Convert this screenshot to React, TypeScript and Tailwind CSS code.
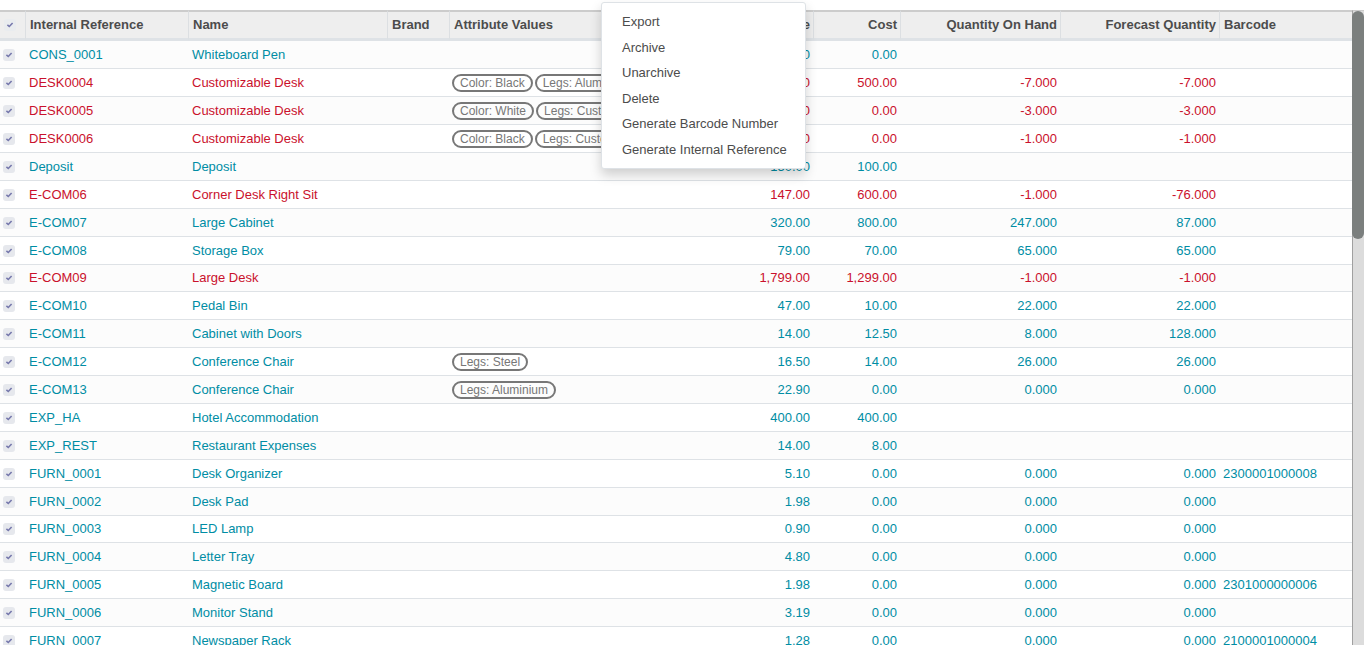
const teal = "text-[#008da4]";
const red = "text-[#ca112c]";

type Row = {
  ref: string;
  name: string;
  tags?: string[];
  price: string;
  cost: string;
  onHand?: string;
  forecast?: string;
  barcode?: string;
  danger?: boolean;
};

const rows: Row[] = [
  { ref: "CONS_0001", name: "Whiteboard Pen", price: "1.20", cost: "0.00" },
  { ref: "DESK0004", name: "Customizable Desk", tags: ["Color: Black", "Legs: Aluminium"], price: "800.40", cost: "500.00", onHand: "-7.000", forecast: "-7.000", danger: true },
  { ref: "DESK0005", name: "Customizable Desk", tags: ["Color: White", "Legs: Custom"], price: "750.00", cost: "0.00", onHand: "-3.000", forecast: "-3.000", danger: true },
  { ref: "DESK0006", name: "Customizable Desk", tags: ["Color: Black", "Legs: Custom"], price: "750.00", cost: "0.00", onHand: "-1.000", forecast: "-1.000", danger: true },
  { ref: "Deposit", name: "Deposit", price: "150.00", cost: "100.00" },
  { ref: "E-COM06", name: "Corner Desk Right Sit", price: "147.00", cost: "600.00", onHand: "-1.000", forecast: "-76.000", danger: true },
  { ref: "E-COM07", name: "Large Cabinet", price: "320.00", cost: "800.00", onHand: "247.000", forecast: "87.000" },
  { ref: "E-COM08", name: "Storage Box", price: "79.00", cost: "70.00", onHand: "65.000", forecast: "65.000" },
  { ref: "E-COM09", name: "Large Desk", price: "1,799.00", cost: "1,299.00", onHand: "-1.000", forecast: "-1.000", danger: true },
  { ref: "E-COM10", name: "Pedal Bin", price: "47.00", cost: "10.00", onHand: "22.000", forecast: "22.000" },
  { ref: "E-COM11", name: "Cabinet with Doors", price: "14.00", cost: "12.50", onHand: "8.000", forecast: "128.000" },
  { ref: "E-COM12", name: "Conference Chair", tags: ["Legs: Steel"], price: "16.50", cost: "14.00", onHand: "26.000", forecast: "26.000" },
  { ref: "E-COM13", name: "Conference Chair", tags: ["Legs: Aluminium"], price: "22.90", cost: "0.00", onHand: "0.000", forecast: "0.000" },
  { ref: "EXP_HA", name: "Hotel Accommodation", price: "400.00", cost: "400.00" },
  { ref: "EXP_REST", name: "Restaurant Expenses", price: "14.00", cost: "8.00" },
  { ref: "FURN_0001", name: "Desk Organizer", price: "5.10", cost: "0.00", onHand: "0.000", forecast: "0.000", barcode: "2300001000008" },
  { ref: "FURN_0002", name: "Desk Pad", price: "1.98", cost: "0.00", onHand: "0.000", forecast: "0.000" },
  { ref: "FURN_0003", name: "LED Lamp", price: "0.90", cost: "0.00", onHand: "0.000", forecast: "0.000" },
  { ref: "FURN_0004", name: "Letter Tray", price: "4.80", cost: "0.00", onHand: "0.000", forecast: "0.000" },
  { ref: "FURN_0005", name: "Magnetic Board", price: "1.98", cost: "0.00", onHand: "0.000", forecast: "0.000", barcode: "2301000000006" },
  { ref: "FURN_0006", name: "Monitor Stand", price: "3.19", cost: "0.00", onHand: "0.000", forecast: "0.000" },
  { ref: "FURN_0007", name: "Newspaper Rack", price: "1.28", cost: "0.00", onHand: "0.000", forecast: "0.000", barcode: "2100001000004" },
];

const actions = ["Export", "Archive", "Unarchive", "Delete", "Generate Barcode Number", "Generate Internal Reference"];

function Tick({ label, head = false }: { label: string; head?: boolean }) {
  return (
    <label className="relative block size-3">
      <input
        type="checkbox"
        defaultChecked
        aria-label={label}
        className={
          head
            ? "peer block size-3 appearance-none rounded-[3px] bg-[#e9ecef]"
            : "peer block size-3 appearance-none rounded-[3px] bg-[#e6e8ed]"
        }
      />
      <svg viewBox="0 0 12 12" className="pointer-events-none absolute inset-0 hidden size-3 peer-checked:block" aria-hidden="true">
        <path d="M3.4 5.8 L5.3 7.5 L8.6 4" fill="none" stroke="#7678ac" strokeWidth="1.6" />
      </svg>
    </label>
  );
}

function Head({ title, right = false }: { title: string; right?: boolean }) {
  return (
    <th
      scope="col"
      className={
        right
          ? "truncate border-t-2 border-b-3 border-l border-t-[#cccccc] border-b-[#dee2e6] border-l-[#dcdfe2] px-[3px] text-right font-bold"
          : "truncate border-t-2 border-b-3 border-l border-t-[#cccccc] border-b-[#dee2e6] border-l-[#dcdfe2] pl-1 text-left font-bold"
      }
    >
      {title}
    </th>
  );
}

export default function App() {
  return (
    <div className="relative flex h-screen overflow-hidden bg-white pt-2.5 font-['Liberation_Sans',Arial,sans-serif] text-[13px] leading-5">
      <main className="min-w-0 flex-1">
        <table className="w-full table-fixed border-separate border-spacing-0">
          <colgroup>
            <col className="w-[25px]" />
            <col className="w-[163px]" />
            <col className="w-[199px]" />
            <col className="w-[62px]" />
            <col />
            <col className="w-[163px]" />
            <col className="w-[87px]" />
            <col className="w-[160px]" />
            <col className="w-[159px]" />
            <col className="w-[133px]" />
          </colgroup>
          <thead className="bg-[#eeeeee] text-[#4c4c4c]">
            <tr className="h-[31px]">
              <th scope="col" className="border-t-2 border-b-3 border-t-[#cccccc] border-b-[#dee2e6] pl-1">
                <Tick label="Select all" head />
              </th>
              <Head title="Internal Reference" />
              <Head title="Name" />
              <Head title="Brand" />
              <Head title="Attribute Values" />
              <Head title="Sales Price" right />
              <Head title="Cost" right />
              <Head title="Quantity On Hand" right />
              <Head title="Forecast Quantity" right />
              <Head title="Barcode" />
            </tr>
          </thead>
          <tbody className="[&_td]:border-b [&_td]:border-[#dee2e6]">
            {rows.map((r) => (
              <tr
                key={r.ref}
                className={`h-7 odd:bg-[#fcfcfc] nth-[9n]:h-[27px] ${r.danger ? red : teal}`}
              >
                <td className="pl-[3px]">
                  <Tick label={`Select ${r.ref}`} />
                </td>
                <td className="truncate pl-1">{r.ref}</td>
                <td className="truncate pl-1">{r.name}</td>
                <td />
                <td className="pl-[3px]">
                  {r.tags && (
                    <div className="flex gap-[2px]">
                      {r.tags.map((t) => (
                        <span key={t} className="h-[18px] shrink-0 rounded-full border-2 border-[#777777] px-1.5 text-xs leading-[14px] whitespace-nowrap text-[#777777]">
                          {t}
                        </span>
                      ))}
                    </div>
                  )}
                </td>
                <td className="pr-[3px] text-right">{r.price}</td>
                <td className="pr-[3px] text-right">{r.cost}</td>
                <td className="pr-[3px] text-right">{r.onHand}</td>
                <td className="pr-[3px] text-right">{r.forecast}</td>
                <td className="truncate pl-1">{r.barcode}</td>
              </tr>
            ))}
          </tbody>
        </table>
      </main>

      <div className="w-3 shrink-0 border-t border-l border-t-[#cccccc] border-l-[#a0a0a0] bg-[#dcdcdc]">
        <div className="-ml-px h-[228px] rounded-full bg-[#7b7f7e]" />
      </div>

      <div
        role="menu"
        className="absolute top-[2px] left-[601px] flex w-[205px] flex-col rounded-[3px] border border-[#dee2e6] bg-white py-1.5 leading-normal text-[#4c4c4c] shadow-[0_6px_12px_rgba(0,0,0,0.18)]"
      >
        {actions.map((a) => (
          <button key={a} type="button" role="menuitem" className="px-5 py-[3px] text-left whitespace-nowrap">
            {a}
          </button>
        ))}
      </div>
    </div>
  );
}
